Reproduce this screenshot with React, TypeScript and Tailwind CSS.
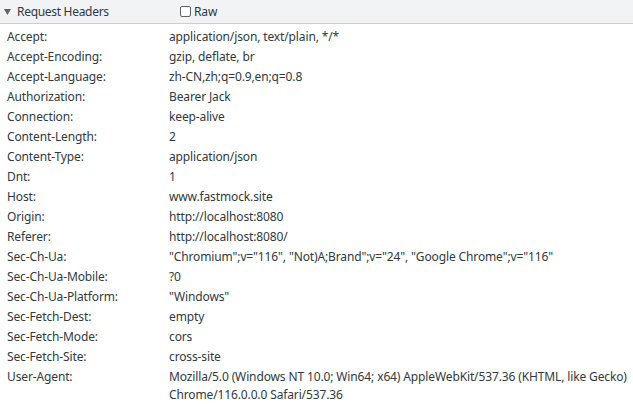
import React from "react";

const rows: [string, string][] = [
  ["Accept:", "application/json, text/plain, */*"],
  ["Accept-Encoding:", "gzip, deflate, br"],
  ["Accept-Language:", "zh-CN,zh;q=0.9,en;q=0.8"],
  ["Authorization:", "Bearer Jack"],
  ["Connection:", "keep-alive"],
  ["Content-Length:", "2"],
  ["Content-Type:", "application/json"],
  ["Dnt:", "1"],
  ["Host:", "www.fastmock.site"],
  ["Origin:", "http://localhost:8080"],
  ["Referer:", "http://localhost:8080/"],
  ["Sec-Ch-Ua:", "\"Chromium\";v=\"116\", \"Not)A;Brand\";v=\"24\", \"Google Chrome\";v=\"116\""],
  ["Sec-Ch-Ua-Mobile:", "?0"],
  ["Sec-Ch-Ua-Platform:", "\"Windows\""],
  ["Sec-Fetch-Dest:", "empty"],
  ["Sec-Fetch-Mode:", "cors"],
  ["Sec-Fetch-Site:", "cross-site"],
  ["User-Agent:", "Mozilla/5.0 (Windows NT 10.0; Win64; x64) AppleWebKit/537.36 (KHTML, like Gecko) Chrome/116.0.0.0 Safari/537.36"],
];

export default function App() {
  return (
    <div
      className="w-[633px] h-[404px] overflow-hidden bg-white text-[12px] text-[#303942] tracking-[-0.13px]"
      style={{ fontFamily: '"Noto Sans", "Open Sans", sans-serif' }}
    >
      <div className="h-[24px] bg-[#f1f3f4] border-b border-[#cacdd1] flex items-center">
        <div className="w-[169px] flex items-center pl-[4px]">
          <svg width="7" height="6" viewBox="0 0 7 6" className="mr-[6px]">
            <path d="M0 0 H7 L3.5 6 Z" fill="#5f6368" />
          </svg>
          <span className="tracking-[-0.3px]">Request Headers</span>
        </div>
        <div className="flex items-center pl-[11px]">
          <span className="w-[11px] h-[11px] border border-[#5f6368] rounded-[2px] bg-white mr-[3px]" />
          <span>Raw</span>
        </div>
      </div>
      <div className="pt-[3px]">
        {rows.map(([k, v]) => (
          <div key={k} className="flex py-[1px] leading-[18px]">
            <div className="w-[169px] shrink-0 pl-[7px]">{k}</div>
            <div className="flex-1 pr-[2px] break-words">{v}</div>
          </div>
        ))}
      </div>
    </div>
  );
}
